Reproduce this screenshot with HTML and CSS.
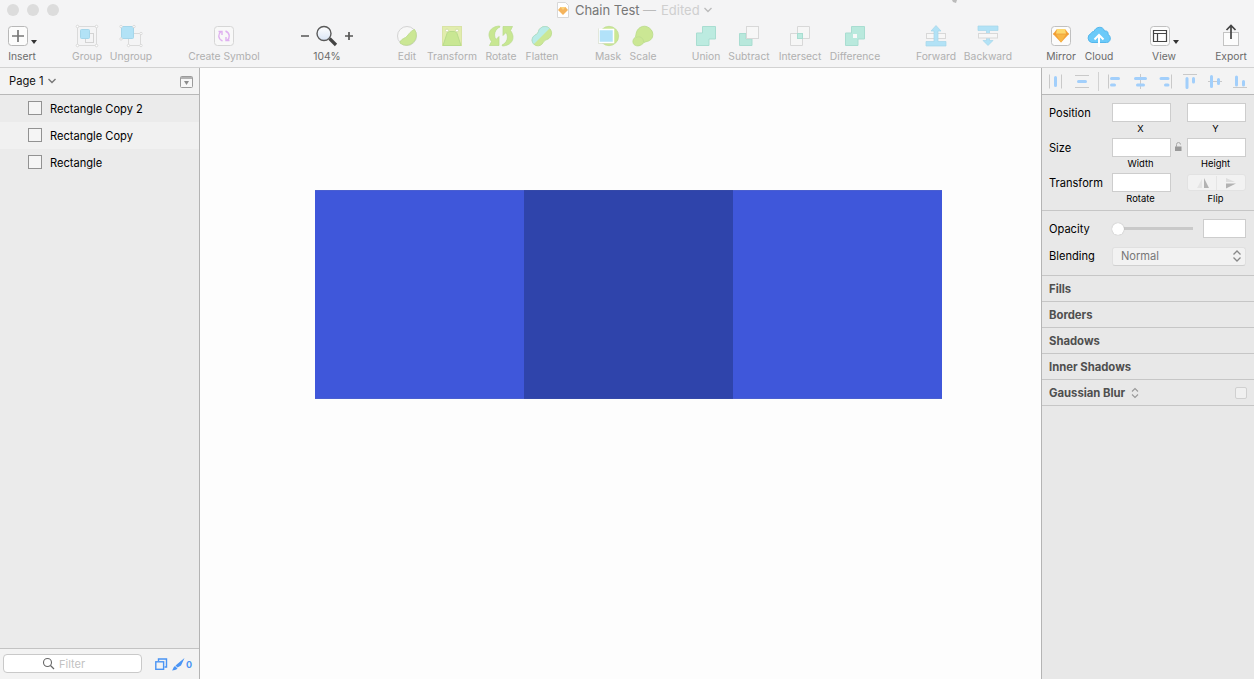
FILE: index.html
```html
<!DOCTYPE html>
<html lang="en">
<head>
<meta charset="utf-8">
<title>Chain Test</title>
<link rel="stylesheet" href="styles.css">
</head>
<body>
<div class="window">
  <header class="chrome">
    <div class="titlebar">
      <div class="lights"><i></i><i></i><i></i></div>
      <div class="title">
        <svg class="doc-icon" width="12" height="16" viewBox="0 0 12 16"><path d="M.5.5h8l3 3v12H.5z" fill="#fff" stroke="#d8d8d8"/><path d="M3.500 5h5l2.500 3L6 13 1 8z" fill="#f5b45c"/><path d="M3.500 5h5L6 8z" fill="#fbd47f"/></svg>
        <span class="name">Chain Test</span><span class="dash">—</span><span class="edited">Edited</span>
        <svg width="10" height="8" viewBox="0 0 10 8"><path d="M1.500 2l3.500 3.500L8.500 2" fill="none" stroke="#bcbcbc" stroke-width="1.400"/></svg>
      </div>
      <svg class="pointer" width="10" height="4" viewBox="0 0 10 4"><path d="M3 0h5l-1 3-3-1z" fill="#bbb"/></svg>
    </div>
    <nav class="toolbar">
      <div class="tool insert"><svg width="36" height="24"><rect x="4.500" y="2.500" width="19" height="19" rx="3" fill="#fcfcfc" stroke="#b8b8b8"/><path d="M14 6v12M8 12h12" stroke="#777" stroke-width="1.700"/><path d="M27 16h6l-3 4z" fill="#333"/></svg><span>Insert</span></div>
      <div class="tool group off"><svg width="24" height="24"><path d="M2.500 2.500h19v19h-19z" fill="none" stroke="#dadada"/><rect x="10.500" y="9.500" width="8" height="9" fill="none" stroke="#d3d3d3"/><rect x="5.500" y="5.500" width="9" height="9" rx="1" fill="#b2e2f6" stroke="#a5d6ea"/><g fill="#fff" stroke="#dadada"><circle cx="2.500" cy="2.500" r="1.300"/><circle cx="21.500" cy="2.500" r="1.300"/><circle cx="2.500" cy="21.500" r="1.300"/><circle cx="21.500" cy="21.500" r="1.300"/></g></svg><span>Group</span></div>
      <div class="tool ungroup off"><svg width="32" height="24"><path d="M14.500 9.500h11v12h-12v-7" fill="none" stroke="#dadada"/><rect x="6.500" y="2.500" width="12" height="12" rx="1" fill="#b2e2f6" stroke="#a5d6ea"/><g fill="#fff" stroke="#dadada"><circle cx="6" cy="2.500" r="1.200"/><circle cx="19" cy="2.500" r="1.200"/><circle cx="6" cy="15" r="1.200"/><circle cx="26" cy="9.500" r="1.200"/><circle cx="13.500" cy="21.500" r="1.200"/><circle cx="26" cy="21.500" r="1.200"/></g></svg><span>Ungroup</span></div>
      <div class="tool symbol off"><svg width="24" height="24"><rect x="2.500" y="2.500" width="19" height="19" rx="3" fill="#f8f8f8" stroke="#d6d6d6"/><g fill="none" stroke="#dfb0f0" stroke-width="1.400"><path d="M10.500 17C5.500 14.500 6 10 9 7.500M6.500 7.500h3.500v3.500M13.500 7c5 2.500 4.500 7 1.500 9.500M17.500 16.500H14V13"/></g></svg><span>Create Symbol</span></div>
      <div class="tool zoom"><svg width="60" height="24"><defs><linearGradient id="lens" x2="0" y2="1"><stop stop-color="#fff"/><stop offset="1" stop-color="#d9e4f5"/></linearGradient></defs><path d="M4 12h8M48 12h8M52 8v8" stroke="#555" stroke-width="1.700"/><path d="M32.500 14.500L39 21" stroke="#444" stroke-width="3.200"/><circle cx="27" cy="9.500" r="7" fill="url(#lens)" stroke="#5a5a5a" stroke-width="1.400"/></svg><span>104%</span></div>
      <div class="tool edit off"><svg width="24" height="24"><circle cx="12" cy="12" r="9.500" fill="#f7f7f7" stroke="#d3d3d3"/><path d="M19.500 5.500A10 10 0 0 1 5 19C5.500 15.500 8 15 10.500 13.500 13 12 14.500 7.500 19.500 5.500z" fill="#cbe794" stroke="#c0dd92"/></svg><span>Edit</span></div>
      <div class="tool transform off"><svg width="24" height="24"><rect x="2.500" y="2.500" width="19" height="19" fill="#e1edad" stroke="#d9e3a6"/><path d="M3 21.500L7 9.500Q7.700 7.500 9.500 7.500h5Q16.300 7.500 17 9.500l4 12z" fill="#c9e793" stroke="#b9dc8c"/><g fill="#fff" stroke="#d3dfa8"><circle cx="7" cy="6.500" r="1.500"/><circle cx="17" cy="6.500" r="1.500"/></g></svg><span>Transform</span></div>
      <div class="tool rotate off"><svg width="26" height="24"><path d="M11.500 2C2 2.500-2 10 3.500 17.500L1.500 21.500h9.500v-9L8 15.500C5 11 7 5 12 3z" fill="#c8e792" stroke="#b7da8a" stroke-width=".7"/><path d="M14.500 22c9.500-.5 13.500-8 8-15.500L24.500 2.500H15v9l3-3c3 4.500 1 10.500-4 12.500z" fill="#c8e792" stroke="#b7da8a" stroke-width=".7"/></svg><span>Rotate</span></div>
      <div class="tool flatten off"><svg width="24" height="24"><defs><clipPath id="upper"><path d="M0 0h24L0 24z"/></clipPath></defs><path id="blob" d="M3.800 20.200a5.800 5.800 0 0 1 0-8.200C5.500 10.500 7.500 10.500 8.300 8a6.700 6.700 0 1 1 8.500 7.600C14 16.500 14 17.500 12.300 19.800a5.800 5.800 0 0 1-8.500.4z" fill="#cbe794" stroke="#b8db8a" stroke-width=".8"/><g clip-path="url(#upper)"><path d="M3.800 20.200a5.800 5.800 0 0 1 0-8.200C5.500 10.500 7.500 10.500 8.300 8a6.700 6.700 0 1 1 8.500 7.600z" fill="#b9ece7" stroke="#abdcd6" stroke-width=".8"/></g></svg><span>Flatten</span></div>
      <div class="tool mask off"><svg width="24" height="24"><circle cx="13" cy="12" r="9.700" fill="#cbe794" stroke="#b7d98b" stroke-width=".6"/><rect x="3" y="5.500" width="14.500" height="13" fill="#b2e2f9" stroke="#fff" stroke-width="1.500"/><path d="M2.500 4.500v15h15" fill="none" stroke="#d0d8c4" stroke-width=".6"/></svg><span>Mask</span></div>
      <div class="tool scale off"><svg width="24" height="24"><path d="M3 20.500C1 18 2 15 4 13.500 5.500 12 4 7 9 3.500a8.500 8.500 0 0 1 12.500 9.500c-2 5-6 4-8.500 5.500C10 22 6 23 3 20.500z" fill="#cbe794" stroke="#b8da88" stroke-width=".8"/><path d="M5 13.500c3.500-2 8 .5 7.500 5" fill="none" stroke="#bddc8e" stroke-width=".8"/></svg><span>Scale</span></div>
      <div class="tool union off"><svg width="24" height="24"><path d="M8.500 2.500h13v12.500H15v6.500H2.500V9h6z" fill="#bcebe0" stroke="#a9ddd1"/></svg><span>Union</span></div>
      <div class="tool subtract off"><svg width="24" height="24"><path d="M2.500 9.500h6.500V15h6v6.500H2.500z" fill="#b8e8dc" stroke="#a9ddd1"/><rect x="9.500" y="2.500" width="12" height="12" fill="#f7f7f7" stroke="#d8d8d8"/></svg><span>Subtract</span></div>
      <div class="tool intersect off"><svg width="24" height="24"><path d="M2.500 9.500h12v12h-12zM9.500 2.500h12v12h-12z" fill="#f7f7f7" fill-opacity=".5" stroke="#d8d8d8"/><rect x="9.500" y="9.500" width="5" height="5" fill="#bcebe0" stroke="#a9ddd1"/></svg><span>Intersect</span></div>
      <div class="tool difference off"><svg width="24" height="24"><path d="M8.500 2.500h13v12.500H15v6.500H2.500V9h6z" fill="#b9e9dd" stroke="#a9ddd1"/><rect x="10" y="10" width="4" height="4" fill="#f9f9f9"/></svg><span>Difference</span></div>
      <div class="tool forward off"><svg width="24" height="24"><rect x="2.500" y="9.500" width="19" height="5" fill="#f7f7f7" stroke="#d8d8d8"/><path d="M2 17.500h8V7H7l5-5.500L17 7h-3v10.500h8V22H2z" fill="#b2e2f6" stroke="#a5d6ea" stroke-width=".7"/></svg><span>Forward</span></div>
      <div class="tool backward off"><svg width="24" height="24"><path d="M2 2h20v4.500h-8.500v10H17l-5 5-5-5h3.500v-10H2z" fill="#b2e2f6" stroke="#a5d6ea" stroke-width=".7"/><rect x="2.500" y="9.500" width="19" height="4.500" fill="#f7f7f7" stroke="#d8d8d8"/></svg><span>Backward</span></div>
      <div class="tool mirror"><svg width="24" height="24"><rect x="2.500" y="2.500" width="19" height="19" rx="3" fill="#fcfcfc" stroke="#c0c0c0"/><path d="M8 5h8l4 5-8 8.500L4 10z" fill="#f4a136"/><path d="M8 5h8L17 10H7z" fill="#fdd86d"/><path d="M7 10h10l-5 8.500z" fill="#f8b746"/><path d="M4 10h16" stroke="#e99a33" stroke-width=".7"/></svg><span>Mirror</span></div>
      <div class="tool cloud"><svg width="26" height="24"><path d="M5.500 18.500a4.800 4.800 0 0 1-.5-9C6 7.500 7 7.500 8 7.500 9.500 2.500 17 1.500 18.500 7c3-.5 4 1.500 3.500 3.500 3.500 1.500 3 8-1.500 8z" fill="#6bcaf9" stroke="#55b7ec"/><path d="M13 23V12M8.500 15.500L13 11l4.500 4.500" fill="none" stroke="#fff" stroke-width="2"/></svg><span>Cloud</span></div>
      <div class="tool view"><svg width="36" height="24"><rect x="4.500" y="2.500" width="19" height="19" rx="3" fill="#fcfcfc" stroke="#c0c0c0"/><path d="M7.500 6.500h13v11h-13zM7.500 9.500h13M11.500 9.500v8" fill="none" stroke="#444" stroke-width="1.200"/><path d="M27 16h6l-3 4z" fill="#333"/></svg><span>View</span></div>
      <div class="tool export"><svg width="24" height="24"><rect x="4.500" y="8.500" width="15" height="13" fill="#fcfcfc" stroke="#c3c3c3"/><path d="M12 15V1.500M7.500 6L12 1.500 16.500 6" fill="none" stroke="#444" stroke-width="1.700"/></svg><span>Export</span></div>
    </nav>
  </header>

  <main class="workspace">
    <aside class="layers">
      <div class="page-head"><span>Page 1</span><svg width="8" height="8"><path d="M.5 2L4 5.500 7.500 2" fill="none" stroke="#777" stroke-width="1.400"/></svg><svg class="collapse" width="14" height="12"><rect x=".5" y=".5" width="12" height="11" rx="1" fill="#f7f7f7" stroke="#9b9b9b"/><path d="M1 2h11" stroke="#9b9b9b" stroke-width="1.500"/><path d="M4 5h5L6.500 9z" fill="#8c8c8c"/></svg></div>
      <ul class="layer-list">
        <li><i></i>Rectangle Copy 2</li>
        <li><i></i>Rectangle Copy</li>
        <li><i></i>Rectangle</li>
      </ul>
      <footer class="filter-bar">
        <div class="filter"><svg width="13" height="13"><circle cx="5.500" cy="5.500" r="4" fill="none" stroke="#666" stroke-width="1.100"/><path d="M8.500 8.500l3.500 3.500" stroke="#666" stroke-width="1.300"/></svg><span>Filter</span></div>
        <svg class="pages-icon" width="13" height="13"><path d="M3.500 3V1h8v8H9.500" fill="none" stroke="#4a94f4" stroke-width="1.400"/><rect x=".8" y="3.800" width="7.800" height="7.500" fill="none" stroke="#4a94f4" stroke-width="1.400"/></svg>
        <svg class="slice-icon" width="13" height="13"><path d="M12.500 0L9 7.500 5.500 9.500 3.500 7.500zM3 8l2.500 2.500C4 12.500 2 12 0 12.500 1.500 11 1 9 3 8z" fill="#4a94f4"/></svg>
        <b>0</b>
      </footer>
    </aside>

    <section class="canvas">
      <div class="shapes"><div></div><div class="overlap"></div><div></div></div>
    </section>

    <aside class="inspector">
      <div class="align-bar">
        <svg width="212" height="26"><g stroke="#c9c9c9"><path d="M7.500 6.500v14M19.500 6.500v14M33 7.500h14M33 19.500h14M66.500 6.500v14M98.500 6v15M129.500 6.500v14"/><path stroke="#d2d2d2" d="M56.500 4v19"/><path d="M141 6.500h14M166 13.500h14M191 19.500h14"/></g><g stroke="#a2cffb" stroke-width="3" stroke-linecap="round"><path d="M13.500 9.500v8M36.500 13.500h7M69.500 10.500h7M69.500 17h3M93.500 10.500h10M95.500 17h6M119 10.500h7M123.500 17h2.500M145 10.500v9M151.500 10.500v3.500M169.500 8.500v10M176.500 11.500v4M194.500 9v8M201.500 13.500v3.500"/></g></svg>
      </div>
      <div class="geometry">
        <label>Position</label><i class="field x1"></i><i class="field x2"></i>
        <small class="x1">X</small><small class="x2">Y</small>
        <label>Size</label><i class="field x1"></i><svg class="lock" width="10" height="12"><path d="M1 5.500h6.500V10H1z" fill="#999"/><path d="M2.500 6V3.500a2 2 0 0 1 4 0" fill="none" stroke="#aaa"/></svg><i class="field x2"></i>
        <small class="x1">Width</small><small class="x2">Height</small>
        <label>Transform</label><i class="field x1"></i><div class="flip x2"><svg width="57" height="16"><path d="M28.500 1v14" stroke="#e5e5e5"/><path d="M14 4v9H9z" fill="#e4e4e4"/><path d="M16 3v10h5z" fill="#b2b2b2"/><path d="M38 3v4h9z" fill="#ddd"/><path d="M38 8.500v5L48 8.500z" fill="#b2b2b2"/></svg></div>
        <small class="x1">Rotate</small><small class="x2">Flip</small>
      </div>
      <div class="appearance">
        <div class="line"><label>Opacity</label><div class="slider"><i></i></div><i class="percent"></i></div>
        <div class="line blend"><label>Blending</label><div class="select"><span>Normal</span><svg width="10" height="14"><path d="M1.500 5.500L5 2l3.500 3.500M1.500 8.500L5 12l3.500-3.500" fill="none" stroke="#888" stroke-width="1.300"/></svg></div></div>
      </div>
      <h3>Fills</h3>
      <h3>Borders</h3>
      <h3>Shadows</h3>
      <h3>Inner Shadows</h3>
      <h3>Gaussian Blur <svg width="8" height="12"><path d="M1 4.500l3-3 3 3M1 7.500l3 3 3-3" fill="none" stroke="#999" stroke-width="1.100"/></svg><i class="check"></i></h3>
    </aside>
  </main>
</div>
</body>
</html>
```
FILE: styles.css
```css
* { box-sizing: border-box; }
body { margin: 0; font-family: Inter, "Liberation Sans", sans-serif; font-size: 11px; color: #111; }
svg { display: block; flex: none; }
i { display: block; font-style: normal; }
.window { width: 1254px; height: 679px; display: flex; flex-direction: column; overflow: hidden; background: #fff; }

.chrome { height: 68px; background: #f4f4f5; border-bottom: 1px solid #d2d2d2; }
.titlebar { height: 22px; position: relative; display: flex; align-items: center; }
.lights { display: flex; gap: 8px; padding: 0 0 2px 7px; width: 557px; }
.lights i { width: 12px; height: 12px; border-radius: 50%; background: #dcdcdc; }
.title { display: flex; align-items: center; height: 20px; margin-top: -2px; font-size: 13px; color: #777; }
.name { margin-left: 6px; width: 68px; white-space: nowrap; letter-spacing: -.05px; }
.dash { width: 18px; color: #bbb; }
.edited { width: 42px; color: #cfcfcf; }
.pointer { position: absolute; left: 949px; top: 0; }

.toolbar { display: flex; padding: 2px 0 0 4px; }
.tool { flex: none; display: flex; flex-direction: column; align-items: center; color: #6b6b6b; font-size: 10.300px; line-height: 14px; white-space: nowrap; }
.tool span { margin-top: 1px; }
.tool.off { color: #b0b0b0; }
.insert { width: 36px; }
.group { width: 38px; margin-left: 28px; }
.ungroup { width: 48px; margin-left: 1px; }
.symbol { width: 80px; margin-left: 29px; }
.zoom { width: 60px; margin-left: 33px; }
.edit { width: 32px; margin-left: 34px; }
.transform { width: 56px; margin-left: 1px; }
.rotate { width: 38px; margin-left: 2px; }
.flatten { width: 40px; margin-left: 2px; }
.mask { width: 32px; margin-left: 30px; }
.scale { width: 32px; margin-left: 3px; }
.union { width: 32px; margin-left: 31px; }
.subtract { width: 48px; margin-left: 3px; }
.intersect { width: 48px; margin-left: 3px; }
.difference { width: 54px; margin-left: 4px; }
.forward { width: 44px; margin-left: 32px; }
.backward { width: 52px; margin-left: 4px; }
.mirror { width: 32px; margin-left: 31px; }
.cloud { width: 32px; margin-left: 6px; }
.view { width: 36px; margin-left: 31px; }
.export { width: 36px; margin-left: 31px; }

.workspace { flex: 1; display: flex; min-height: 0; }
.layers { width: 200px; display: flex; flex-direction: column; background: #ebebeb; border-right: 1px solid #b4b4b4; }
.page-head { height: 27px; display: flex; align-items: center; gap: 4px; padding: 0 5px 0 9px; background: #f3f3f3; border-bottom: 1px solid #b8b8b8; font-size: 11.200px; }
.collapse { margin-left: auto; margin-top: 1px; }
.layer-list { flex: 1; margin: 0; padding: 0; list-style: none; }
.layer-list li { height: 27px; display: flex; align-items: center; gap: 8px; padding: 1px 0 0 28px; font-size: 11.100px; color: #000; }
.layer-list li:nth-child(2) { background: #f1f1f1; }
.layer-list i { width: 14px; height: 14px; margin-bottom: 2px; border: 1px solid #929292; background: #f5f5f5; }
.filter-bar { height: 31px; display: flex; align-items: center; padding-left: 3px; border-top: 1px solid #c3c3c3; background: #f3f3f3; }
.filter { width: 139px; height: 19px; display: flex; align-items: center; gap: 4px; padding-left: 38px; margin-top: -1px; border: 1px solid #c9c9c9; border-radius: 4px; background: #fff; color: #c2c2c2; }
.pages-icon { margin-left: 13px; }
.slice-icon { margin-left: 4px; }
.filter-bar b { margin-left: 1px; color: #4a94f4; font-size: 9px; }

.canvas { flex: 1; background: #fdfdfd; padding: 122px 0 0 115px; }
.shapes { width: 627px; height: 209px; display: grid; grid-template-columns: repeat(3, 209px); }
.shapes div { background: #3f57da; border: solid #4a5fd0; border-width: 1px 0; }
.shapes .overlap { background: #2f44ab; border-color: #3549a8; }

.inspector { width: 213px; background: #e8e8e8; border-left: 1px solid #b4b4b4; color: #000; }
.align-bar { height: 27px; background: #f3f3f3; border-bottom: 1px solid #b8b8b8; }
.geometry { height: 116px; display: grid; grid-template-columns: 63px 59px 16px 59px; grid-template-rows: 20px 15px 20px 15px 20px 15px; padding: 8px 0 0 7px; border-bottom: 1px solid #c6c6c6; }
.geometry label { grid-column: 1; align-self: center; font-size: 11.100px; }
.geometry .lock { grid-column: 3; margin: 3px 0 0 3px; }
.x1 { grid-column: 2; }
.x2 { grid-column: 4; }
.field, .percent { height: 19px; background: #fff; border: 1px solid #cdcdcd; }
.geometry small { padding-right: 2px; text-align: center; font-size: 9.400px; line-height: 12px; }
.flip { height: 17px; margin-top: 1px; border-radius: 3px; background: #f2f2f2; border: 1px solid #e2e2e2; overflow: hidden; }
.appearance { height: 65px; padding: 8px 8px 0 7px; border-bottom: 1px solid #c6c6c6; }
.line { display: flex; align-items: center; height: 20px; font-size: 11.100px; }
.line label { width: 63px; flex: none; }
.slider { width: 81px; height: 12px; margin-top: -1px; display: flex; align-items: center; background: linear-gradient(#c9c9c9, #c9c9c9) center / 100% 3px no-repeat; }
.slider i { width: 12px; height: 12px; border-radius: 50%; background: #fff; box-shadow: 0 0 1px #999; }
.percent { width: 43px; margin-left: 10px; margin-top: -1px; }
.blend { margin-top: 7px; }
.select { width: 134px; height: 19px; display: flex; flex: none; align-items: center; justify-content: space-between; padding: 0 3px 0 8px; border: 1px solid #e0e0e0; border-bottom-color: #d0d0d0; border-radius: 3px; background: #f2f2f2; color: #777; }
.inspector h3 { height: 26px; margin: 0; padding: 1px 7px 0; display: flex; align-items: center; gap: 6px; border-bottom: 1px solid #c6c6c6; font-size: 11.300px; font-weight: 700; color: #4f4f4f; }
.check { width: 12px; height: 12px; margin-left: auto; border: 1px solid #d0d0d0; border-radius: 2px; background: #f0f0f0; }
```
